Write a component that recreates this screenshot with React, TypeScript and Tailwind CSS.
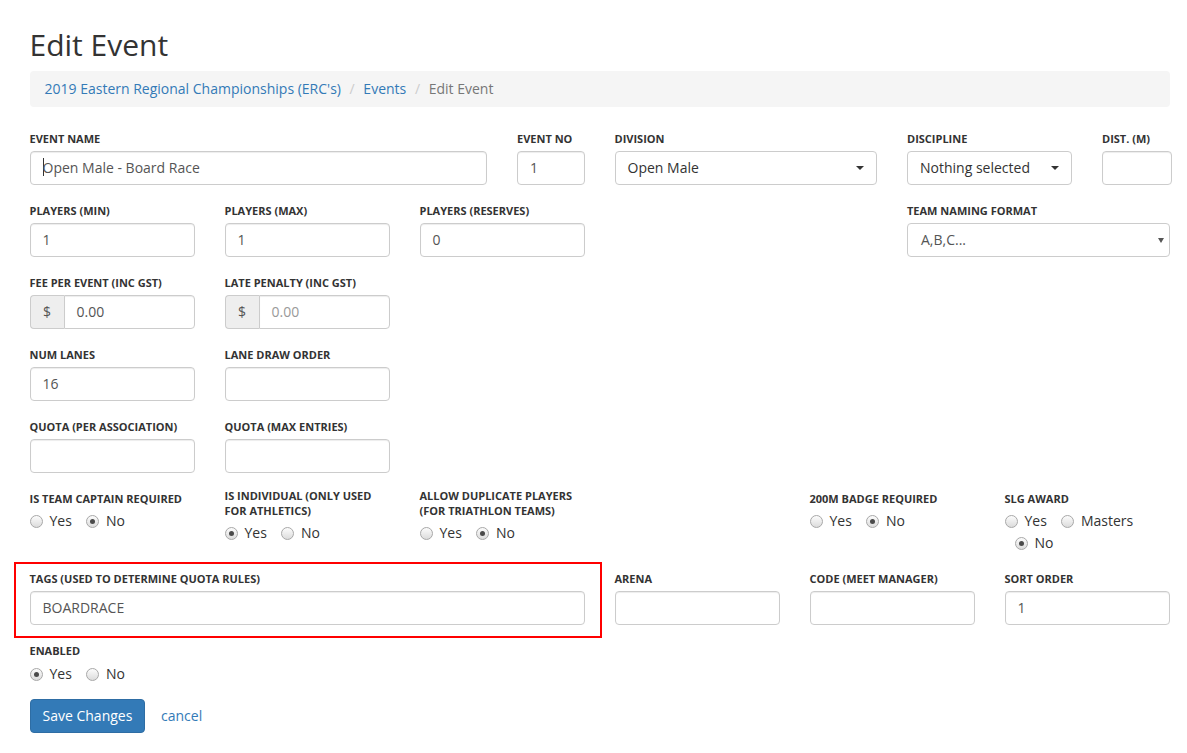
import type { ReactNode } from 'react'

function Label({ children, tight }: { children: ReactNode; tight?: boolean }) {
  return (
    <label
      className={`mb-[5px] block text-[11px] font-bold uppercase leading-[15px] text-[#333] ${tight ? '' : 'pt-[3px]'}`}
    >
      {children}
    </label>
  )
}

function TextBox({ value, className = '' }: { value?: string; className?: string }) {
  return (
    <div
      className={`h-[34px] rounded-[4px] border border-[#ccc] bg-white px-3 py-[6px] text-sm leading-5 text-[#555] shadow-[inset_0_1px_1px_rgba(0,0,0,0.075)] ${className}`}
    >
      {value}
    </div>
  )
}

function PickerButton({ value }: { value: string }) {
  return (
    <div className="flex h-[34px] w-full items-center justify-between rounded-[4px] border border-[#ccc] bg-white px-3 text-sm leading-5 text-[#333]">
      <span>{value}</span>
      <span className="h-0 w-0 border-x-4 border-t-4 border-x-transparent border-t-[#333]" />
    </div>
  )
}

function MoneyBox({ value, placeholder }: { value: string; placeholder?: boolean }) {
  return (
    <div className="flex h-[34px] w-full">
      <div className="flex w-[34px] items-center justify-center rounded-l-[4px] border border-r-0 border-[#ccc] bg-[#eee] text-sm text-[#555]">
        $
      </div>
      <div
        className={`flex-1 rounded-r-[4px] border border-[#ccc] bg-white px-3 py-[6px] text-sm leading-5 shadow-[inset_0_1px_1px_rgba(0,0,0,0.075)] ${
          placeholder ? 'text-[#999]' : 'text-[#555]'
        }`}
      >
        {value}
      </div>
    </div>
  )
}

function Radio({ label, checked, first }: { label: string; checked?: boolean; first?: boolean }) {
  return (
    <span className={`mr-[4px] flex h-5 items-center ${first ? '' : 'ml-[10px]'}`}>
      <span className="flex h-[13px] w-[13px] items-center justify-center rounded-full border border-[#a8a8a8] bg-linear-to-b from-[#fcfcfc] to-[#dcdcdc]">
        {checked && <span className="h-[5px] w-[5px] rounded-full bg-[#4a4a4a]" />}
      </span>
      <span className="ml-[7px] text-[#333]">{label}</span>
    </span>
  )
}

function RadioGroup({ options, selected }: { options: string[]; selected: string }) {
  return (
    <div className="flex flex-wrap gap-y-[2px]">
      {options.map((o, i) => (
        <Radio key={o} label={o} checked={o === selected} first={i === 0} />
      ))}
    </div>
  )
}

export default function App() {
  return (
    <div className="min-h-screen bg-white font-['Open_Sans',sans-serif] text-sm leading-[1.42857] text-[#333]">
      <div className="ml-[14.5px] w-[1170px] px-[15px]">
        <h2 className="mt-[28px] mb-[10px] text-[30px] font-normal leading-[33px] text-[#333]">Edit Event</h2>

        <ol className="mb-[21px] rounded-[4px] bg-[#f5f5f5] px-[15px] py-2 leading-5">
          <li className="inline-block text-[#337ab7]">2019 Eastern Regional Championships (ERC's)</li>{' '}
          <li className="inline-block">
            <span className="px-[5px] text-[#ccc]">/&nbsp;</span>
            <span className="text-[#337ab7]">Events</span>
          </li>{' '}
          <li className="inline-block text-[#777]">
            <span className="px-[5px] text-[#ccc]">/&nbsp;</span>
            Edit Event
          </li>
        </ol>

        <div className="-mx-[15px] grid grid-cols-12 items-start">
          <div className="col-span-5 mb-[15px] px-[15px]">
            <Label>Event Name</Label>
            <div className="h-[34px] rounded-[4px] border border-[#ccc] bg-white px-3 py-[6px] text-sm leading-5 text-[#555] shadow-[inset_0_1px_1px_rgba(0,0,0,0.075)]">
              <span className="-mr-px inline-block h-[18px] w-px bg-[#333] align-top" />
              Open Male - Board Race
            </div>
          </div>
          <div className="col-span-1 mb-[15px] px-[15px]">
            <Label>Event No</Label>
            <TextBox value="1" />
          </div>
          <div className="col-span-3 mb-[15px] px-[15px]">
            <Label>Division</Label>
            <PickerButton value="Open Male" />
          </div>
          <div className="col-span-2 mb-[15px] px-[15px]">
            <Label>Discipline</Label>
            <PickerButton value="Nothing selected" />
          </div>
          <div className="col-span-1 mb-[15px] px-[15px]">
            <Label>Dist. (m)</Label>
            <TextBox className="w-[70px]" />
          </div>
        </div>

        <div className="-mx-[15px] grid grid-cols-12 items-start">
          <div className="col-span-2 mb-[15px] px-[15px]">
            <Label>Players (min)</Label>
            <TextBox value="1" />
          </div>
          <div className="col-span-2 mb-[15px] px-[15px]">
            <Label>Players (max)</Label>
            <TextBox value="1" />
          </div>
          <div className="col-span-2 mb-[15px] px-[15px]">
            <Label>Players (reserves)</Label>
            <TextBox value="0" />
          </div>
          <div className="col-span-3 col-start-10 mb-[15px] px-[15px]">
            <Label>Team Naming Format</Label>
            <div className="flex h-[34px] items-center justify-between rounded-[4px] border border-[#ccc] bg-white pl-[13px] pr-[5px] text-sm leading-5 text-[#555]">
              <span>A,B,C...</span>
              <svg width="6" height="5" viewBox="0 0 6 5">
                <polygon points="0,0 6,0 3,5" fill="#555" />
              </svg>
            </div>
          </div>
        </div>

        <div className="-mx-[15px] grid grid-cols-12 items-start">
          <div className="col-span-2 mb-[15px] px-[15px]">
            <Label>Fee per event (inc GST)</Label>
            <MoneyBox value="0.00" />
          </div>
          <div className="col-span-2 mb-[15px] px-[15px]">
            <Label>Late penalty (inc GST)</Label>
            <MoneyBox value="0.00" placeholder />
          </div>
        </div>

        <div className="-mx-[15px] grid grid-cols-12 items-start">
          <div className="col-span-2 mb-[15px] px-[15px]">
            <Label>Num Lanes</Label>
            <TextBox value="16" />
          </div>
          <div className="col-span-2 mb-[15px] px-[15px]">
            <Label>Lane Draw Order</Label>
            <TextBox />
          </div>
        </div>

        <div className="-mx-[15px] grid grid-cols-12 items-start">
          <div className="col-span-2 mb-[15px] px-[15px]">
            <Label>Quota (per association)</Label>
            <TextBox />
          </div>
          <div className="col-span-2 mb-[15px] px-[15px]">
            <Label>Quota (max entries)</Label>
            <TextBox />
          </div>
        </div>

        <div className="-mx-[15px] grid grid-cols-12 items-start">
          <div className="col-span-2 mb-[15px] px-[15px]">
            <Label>Is team captain required</Label>
            <RadioGroup options={['Yes', 'No']} selected="No" />
          </div>
          <div className="col-span-2 mb-[15px] px-[15px]">
            <Label tight>Is individual (only used for athletics)</Label>
            <RadioGroup options={['Yes', 'No']} selected="Yes" />
          </div>
          <div className="col-span-2 mb-[15px] px-[15px]">
            <Label tight>Allow duplicate players (for triathlon teams)</Label>
            <RadioGroup options={['Yes', 'No']} selected="No" />
          </div>
          <div className="col-span-2 col-start-9 mb-[15px] px-[15px]">
            <Label>200m badge required</Label>
            <RadioGroup options={['Yes', 'No']} selected="No" />
          </div>
          <div className="col-span-2 col-start-11 mb-[15px] px-[15px]">
            <Label>SLG Award</Label>
            <RadioGroup options={['Yes', 'Masters', 'No']} selected="No" />
          </div>
        </div>

        <div className="-mx-[15px] grid grid-cols-12 items-start">
          <div className="relative col-span-6 mb-[15px] px-[15px]">
            <Label>Tags (used to determine quota rules)</Label>
            <TextBox value="BOARDRACE" />
            <div className="pointer-events-none absolute -top-[6px] -right-[2px] -bottom-[13px] -left-px border-2 border-[#f00]" />
          </div>
          <div className="col-span-2 col-start-7 mb-[15px] px-[15px]">
            <Label>Arena</Label>
            <TextBox />
          </div>
          <div className="col-span-2 col-start-9 mb-[15px] px-[15px]">
            <Label>Code (Meet Manager)</Label>
            <TextBox />
          </div>
          <div className="col-span-2 col-start-11 mb-[15px] px-[15px]">
            <Label>Sort Order</Label>
            <TextBox value="1" />
          </div>
        </div>

        <div className="mb-[15px]">
          <Label>Enabled</Label>
          <div className="pt-px">
            <RadioGroup options={['Yes', 'No']} selected="Yes" />
          </div>
        </div>

        <div>
          <button
            type="button"
            className="h-[34px] rounded-[4px] border border-[#2e6da4] bg-[#337ab7] px-3 text-sm leading-5 text-white"
          >
            Save Changes
          </button>{' '}
          <a className="inline-block px-3 py-[6px] text-sm leading-5 text-[#337ab7]">cancel</a>
        </div>
      </div>
    </div>
  )
}
